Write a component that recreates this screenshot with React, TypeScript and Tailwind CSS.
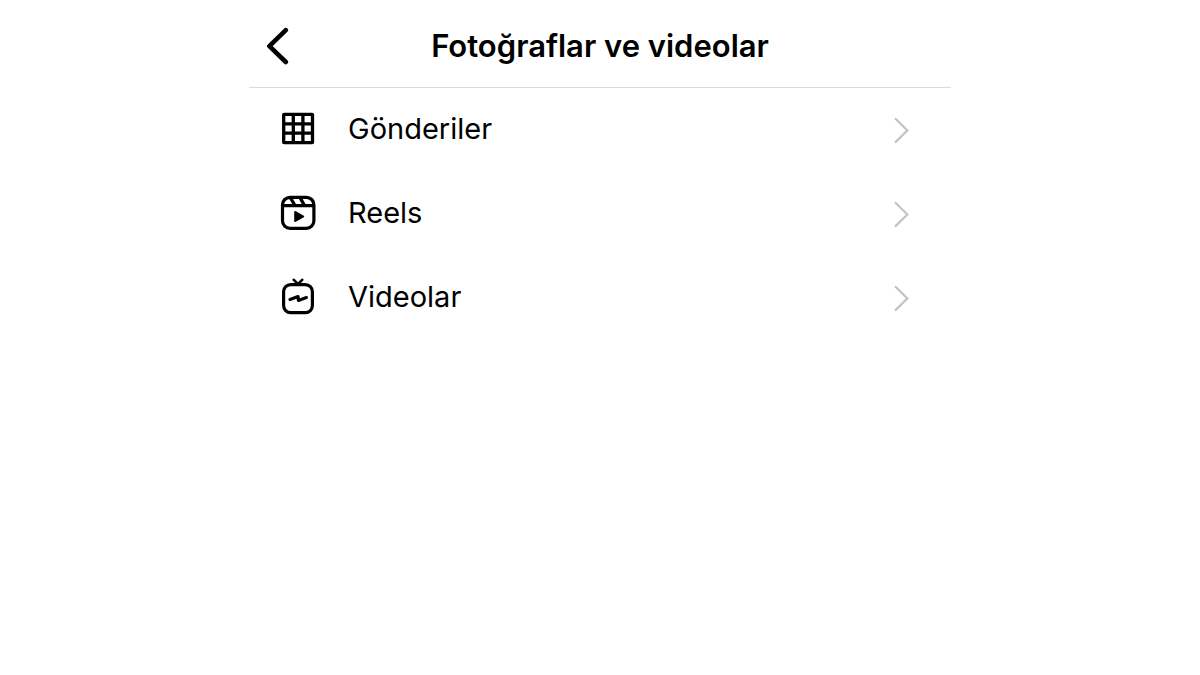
import type { ReactNode } from "react";

function GridIcon() {
  return (
    <svg viewBox="0 0 40 40" className="size-10" fill="none" stroke="currentColor" strokeWidth="3.3" aria-hidden="true">
      <rect x="5.7" y="5.3" width="28.8" height="28.4" rx="0.4" strokeLinejoin="round" />
      <path d="M15.3 5.3v28.4M24.9 5.3v28.4M5.7 14.8h28.8M5.7 24.2h28.8" />
    </svg>
  );
}

function ReelsIcon() {
  return (
    <svg viewBox="0 0 40 40" className="size-10" fill="none" stroke="currentColor" strokeWidth="3.2" aria-hidden="true">
      <rect x="4.5" y="4.3" width="31.4" height="31" rx="7.5" />
      <path d="M4.5 12.6h31.4M12.4 4.6l4.6 8M22 4.6l4.6 8" />
      <path d="M17 18.8v9.4l8.4-4.7z" fill="currentColor" strokeWidth="1.6" strokeLinejoin="round" />
    </svg>
  );
}

function TvIcon() {
  return (
    <svg
      viewBox="0 0 40 40"
      className="size-10"
      fill="none"
      stroke="currentColor"
      strokeWidth="3.2"
      strokeLinecap="round"
      strokeLinejoin="round"
      aria-hidden="true"
    >
      <rect x="5.6" y="7.6" width="28.8" height="28" rx="7" />
      <path d="M15.8 2.8L20 7.2l4.2-4.4" strokeWidth="2.6" />
      <path d="M12 22.4l8-2.8.4 3.8 8-2.8" />
    </svg>
  );
}

const items: { label: string; icon: ReactNode }[] = [
  { label: "Gönderiler", icon: <GridIcon /> },
  { label: "Reels", icon: <ReelsIcon /> },
  { label: "Videolar", icon: <TvIcon /> },
];

export default function App() {
  return (
    <main className="mx-auto min-h-screen w-full max-w-[702px] bg-white font-['Inter',sans-serif] text-black">
      <header className="grid grid-cols-[56px_1fr_56px] items-center border-b border-[#dbdbdb] pt-5 pb-4">
        <button type="button" aria-label="Geri" className="flex h-[51px] items-center pl-4">
          <svg viewBox="0 0 24 40" className="h-10 w-6" fill="none" stroke="currentColor" strokeWidth="4.6" strokeLinecap="round" strokeLinejoin="round">
            <path d="M20.8 4.2L4.4 20.2l16.4 15.8" />
          </svg>
        </button>
        <h1 className="text-center text-[31px] leading-10 font-semibold">Fotoğraflar ve videolar</h1>
      </header>

      <ul>
        {items.map((item) => (
          <li key={item.label}>
            <button type="button" className="flex h-[84px] w-full items-center pr-10 pb-0.5 pl-[29px] text-left">
              {item.icon}
              <span className="ml-[30px] flex-1 text-[29px] leading-10">{item.label}</span>
              <svg viewBox="0 0 20 32" className="h-8 w-5" fill="none" stroke="#c4c4c6" strokeWidth="2.2" aria-hidden="true">
                <path d="M4 5.2l12.4 12.2L4 29.6" />
              </svg>
            </button>
          </li>
        ))}
      </ul>
    </main>
  );
}
